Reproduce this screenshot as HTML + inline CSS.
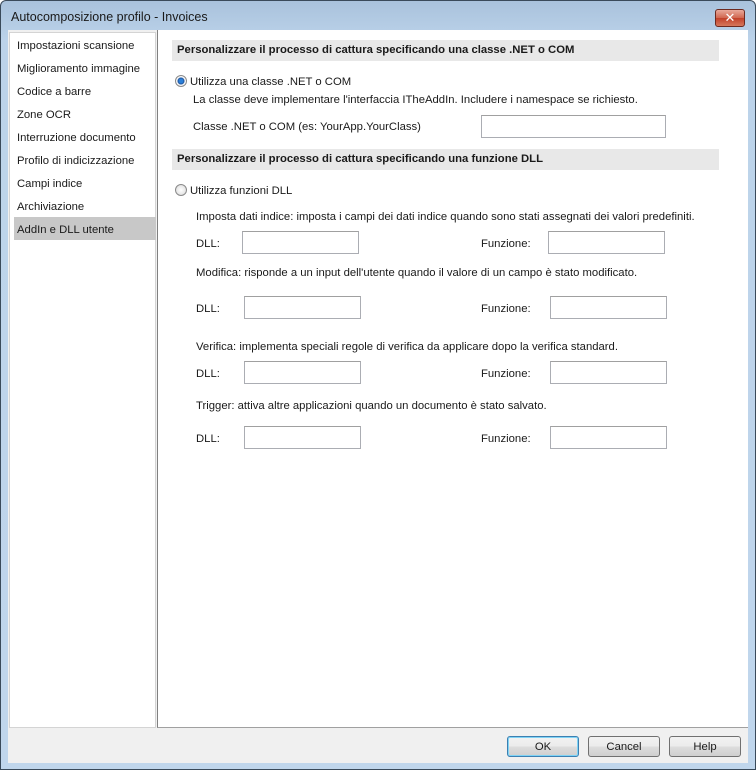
<!DOCTYPE html>
<html><head><style>
*{margin:0;padding:0;box-sizing:border-box}
body{width:756px;height:770px;position:relative;overflow:hidden;background:#fff;font-family:"Liberation Sans","DejaVu Sans",sans-serif;font-size:11.3px;color:#1a1a1a}
.a{position:absolute;white-space:nowrap}
.t{margin-top:2px}
.frame{position:absolute;left:0;top:0;width:756px;height:770px;border:1px solid #3a4a5a;border-radius:6px 6px 0 0;background:linear-gradient(#a9c2dc,#bcd3ea 40px,#c0d6ec)}
.inp{position:absolute;height:23px;border:1px solid #abadb3;background:#fff;border-top-color:#a0a0a0}
.hdr{position:absolute;left:172px;width:547px;height:21px;background:#e8e8e8;font-weight:bold;padding:4px 0 0 5px}
.nav div{height:23px;padding:7px 0 0 7px}
.btn{position:absolute;top:736px;width:72px;height:21px;border:1px solid #707070;border-radius:3px;background:linear-gradient(#f2f2f2,#ebebeb 50%,#dddddd 51%,#cfcfcf);text-align:center;padding-top:3px}
.radio{position:absolute;width:12px;height:12px;border-radius:50%;border:1px solid #8a8a8a;background:radial-gradient(#fff,#d8d8d8)}
</style></head><body>
<div class="frame"></div>
<div class="a" style="left:11px;top:10px;font-size:12.5px">Autocomposizione profilo - Invoices</div>
<div class="a" style="left:715px;top:9px;width:30px;height:18px;border:1px solid #6d2a20;border-radius:3px;background:linear-gradient(#e9a99b,#d0664f 50%,#c2412a 51%,#d6785c);color:#fff;font-weight:bold;text-align:center;font-size:13px;line-height:15px">✕</div>
<div class="a" style="left:8px;top:30px;width:740px;height:733px;background:#f0f0f0"></div>
<div class="a nav" style="left:9px;top:32px;width:147px;height:696px;background:#fff;border:1px solid #d4d4d4">
<div>Impostazioni scansione</div><div>Miglioramento immagine</div><div>Codice a barre</div><div>Zone OCR</div><div>Interruzione documento</div><div>Profilo di indicizzazione</div><div>Campi indice</div><div>Archiviazione</div><div style="background:#c8c8c8;width:142px;margin-left:4px;padding-left:3px">AddIn e DLL utente</div>
</div>
<div class="a" style="left:157px;top:30px;width:591px;height:698px;background:#fff;border-left:1px solid #808080;border-bottom:1px solid #a0a0a0"></div>
<div class="hdr" style="top:40px">Personalizzare il processo di cattura specificando una classe .NET o COM</div>
<div class="radio" style="left:175px;top:75px;background:radial-gradient(#2a7fd8 2px,#1a4f9a 3px,#fff 4px,#d8d8d8)"></div>
<div class="a t" style="left:190px;top:74px">Utilizza una classe .NET o COM</div>
<div class="a t" style="left:193px;top:92px">La classe deve implementare l'interfaccia ITheAddIn. Includere i namespace se richiesto.</div>
<div class="a t" style="left:193px;top:119px">Classe .NET o COM (es: YourApp.YourClass)</div>
<div class="inp" style="left:481px;top:115px;width:185px"></div>
<div class="hdr" style="top:149px">Personalizzare il processo di cattura specificando una funzione DLL</div>
<div class="radio" style="left:175px;top:184px"></div>
<div class="a t" style="left:190px;top:183px">Utilizza funzioni DLL</div>
<div class="a t" style="left:196px;top:209px">Imposta dati indice: imposta i campi dei dati indice quando sono stati assegnati dei valori predefiniti.</div>
<div class="a t" style="left:196px;top:236px">DLL:</div><div class="inp" style="left:242px;top:231px;width:117px"></div>
<div class="a t" style="left:481px;top:236px">Funzione:</div><div class="inp" style="left:548px;top:231px;width:117px"></div>
<div class="a t" style="left:196px;top:265px">Modifica: risponde a un input dell'utente quando il valore di un campo è stato modificato.</div>
<div class="a t" style="left:196px;top:301px">DLL:</div><div class="inp" style="left:244px;top:296px;width:117px"></div>
<div class="a t" style="left:481px;top:301px">Funzione:</div><div class="inp" style="left:550px;top:296px;width:117px"></div>
<div class="a t" style="left:196px;top:339px">Verifica: implementa speciali regole di verifica da applicare dopo la verifica standard.</div>
<div class="a t" style="left:196px;top:366px">DLL:</div><div class="inp" style="left:244px;top:361px;width:117px"></div>
<div class="a t" style="left:481px;top:366px">Funzione:</div><div class="inp" style="left:550px;top:361px;width:117px"></div>
<div class="a t" style="left:196px;top:398px">Trigger: attiva altre applicazioni quando un documento è stato salvato.</div>
<div class="a t" style="left:196px;top:431px">DLL:</div><div class="inp" style="left:244px;top:426px;width:117px"></div>
<div class="a t" style="left:481px;top:431px">Funzione:</div><div class="inp" style="left:550px;top:426px;width:117px"></div>
<div class="btn" style="left:507px;border-color:#3c7fb1;box-shadow:inset 0 0 0 1px #7fd3f5;padding-top:4px">OK</div>
<div class="btn" style="left:588px;padding-top:4px">Cancel</div>
<div class="btn" style="left:669px;padding-top:4px">Help</div>
</body></html>
